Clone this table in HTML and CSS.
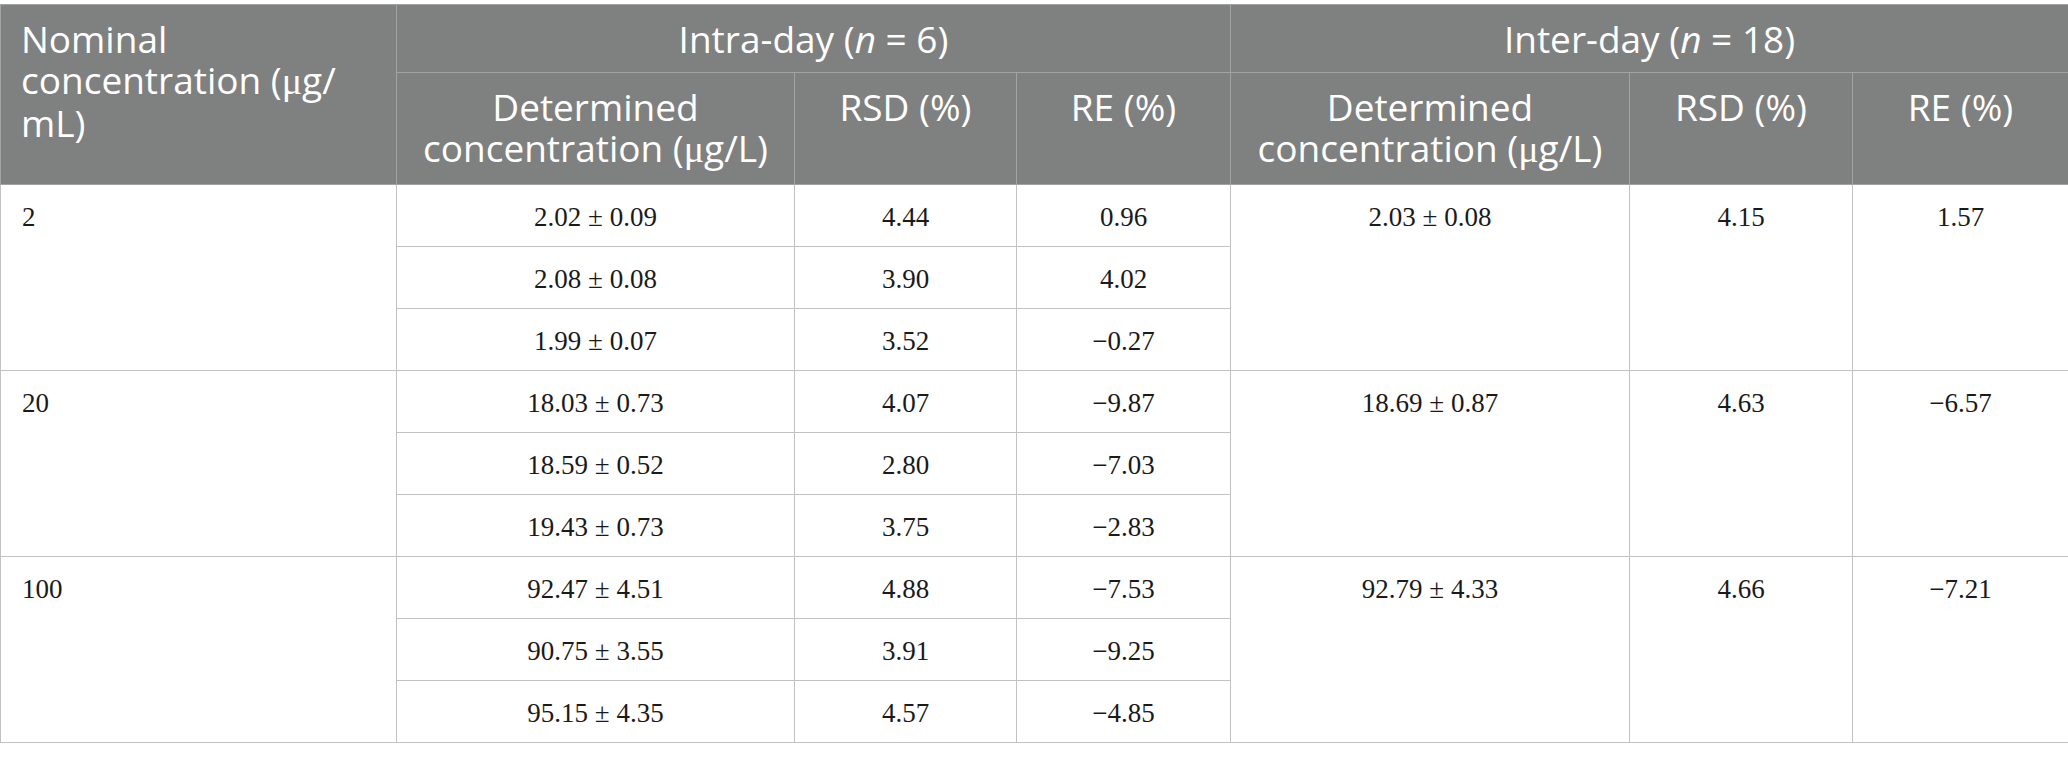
FILE: index.html
```html
<!DOCTYPE html>
<html lang="en">
<head>
<meta charset="utf-8">
<title>Precision and accuracy</title>
<link rel="stylesheet" href="styles.css">
</head>
<body>
<table class="data-table">
  <colgroup>
    <col class="c-nom">
    <col class="c-det">
    <col class="c-rsd">
    <col class="c-re">
    <col class="c-det2">
    <col class="c-rsd2">
    <col class="c-re2">
  </colgroup>
  <thead>
    <tr class="head-top">
      <th rowspan="2" class="left">Nominal<br>concentration (<span class="mu">μ</span>g/<br>mL)</th>
      <th colspan="3">Intra-day (<i>n</i> = 6)</th>
      <th colspan="3">Inter-day (<i>n</i> = 18)</th>
    </tr>
    <tr class="head-sub">
      <th>Determined<br>concentration (<span class="mu">μ</span>g/L)</th>
      <th>RSD (%)</th>
      <th>RE (%)</th>
      <th>Determined<br>concentration (<span class="mu">μ</span>g/L)</th>
      <th>RSD (%)</th>
      <th>RE (%)</th>
    </tr>
  </thead>
  <tbody>
    <tr>
      <td rowspan="3" class="left">2</td>
      <td>2.02 ± 0.09</td><td>4.44</td><td>0.96</td>
      <td rowspan="3">2.03 ± 0.08</td><td rowspan="3">4.15</td><td rowspan="3">1.57</td>
    </tr>
    <tr><td>2.08 ± 0.08</td><td>3.90</td><td>4.02</td></tr>
    <tr><td>1.99 ± 0.07</td><td>3.52</td><td>−0.27</td></tr>
    <tr>
      <td rowspan="3" class="left">20</td>
      <td>18.03 ± 0.73</td><td>4.07</td><td>−9.87</td>
      <td rowspan="3">18.69 ± 0.87</td><td rowspan="3">4.63</td><td rowspan="3">−6.57</td>
    </tr>
    <tr><td>18.59 ± 0.52</td><td>2.80</td><td>−7.03</td></tr>
    <tr><td>19.43 ± 0.73</td><td>3.75</td><td>−2.83</td></tr>
    <tr>
      <td rowspan="3" class="left">100</td>
      <td>92.47 ± 4.51</td><td>4.88</td><td>−7.53</td>
      <td rowspan="3">92.79 ± 4.33</td><td rowspan="3">4.66</td><td rowspan="3">−7.21</td>
    </tr>
    <tr><td>90.75 ± 3.55</td><td>3.91</td><td>−9.25</td></tr>
    <tr><td>95.15 ± 4.35</td><td>4.57</td><td>−4.85</td></tr>
  </tbody>
</table>
</body>
</html>
```
FILE: styles.css
```css
html, body {
  margin: 0;
  padding: 0;
  background: #ffffff;
}

body {
  padding-top: 4px;
}

.data-table {
  width: 2068px;
  table-layout: fixed;
  border-collapse: collapse;
  border: 1px solid #c2c2c2;
}

.c-nom { width: 396px; }
.c-det { width: 398px; }
.c-rsd { width: 222px; }
.c-re { width: 214px; }
.c-det2 { width: 399px; }
.c-rsd2 { width: 223px; }
.c-re2 { width: 216px; }

.data-table th {
  background: #7f8080;
  color: #ffffff;
  font-family: "Open Sans", "Noto Sans", sans-serif;
  font-weight: 400;
  font-size: 37px;
  line-height: 41px;
  text-align: center;
  vertical-align: top;
  white-space: nowrap;
  border: 1px solid #a3a3a3;
  padding: 13px 12px;
}

.data-table th i {
  font-style: italic;
}

.data-table .head-sub th {
  padding-bottom: 14px;
}

.data-table th.left {
  text-align: left;
  padding-left: 20px;
}

.mu {
  font-family: "Liberation Serif", serif;
  font-size: 38px;
}

.data-table td {
  font-family: "Liberation Serif", "Times New Roman", serif;
  font-size: 27px;
  line-height: 30px;
  color: #1a1a1a;
  text-align: center;
  vertical-align: top;
  border: 1px solid #c2c2c2;
  padding: 17px 12px 14px;
}

.data-table td.left {
  text-align: left;
  padding-left: 21px;
}
```
